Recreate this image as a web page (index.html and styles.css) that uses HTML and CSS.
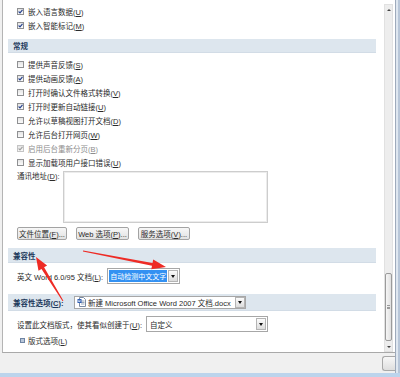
FILE: index.html
```html
<!DOCTYPE html>
<html lang="zh-CN">
  <head>
    <meta charset="UTF-8" />
    <meta name="viewport" content="width=device-width, initial-scale=1.0" />
    <title>Word 选项 - 高级</title>
    <link rel="stylesheet" href="styles.css">
  </head>
  <body>
    <div class="screen">
      <div class="dialog">
        <div class="pane">
          <div class="content">
            <div class="opt"><span class="box"><svg viewBox="0 0 5 5"><path d="M0.6 2.5 2 3.9 4.5 0.8" /></svg></span><span>嵌入语言数据(<u>U</u>)</span></div>
            <div class="opt"><span class="box"><svg viewBox="0 0 5 5"><path d="M0.6 2.5 2 3.9 4.5 0.8" /></svg></span><span>嵌入智能标记(<u>M</u>)</span></div>

            <div class="section general">常规</div>
            <div class="opt"><span class="box"></span><span>提供声音反馈(<u>S</u>)</span></div>
            <div class="opt"><span class="box"><svg viewBox="0 0 5 5"><path d="M0.6 2.5 2 3.9 4.5 0.8" /></svg></span><span>提供动画反馈(<u>A</u>)</span></div>
            <div class="opt"><span class="box"></span><span>打开时确认文件格式转换(<u>V</u>)</span></div>
            <div class="opt"><span class="box"><svg viewBox="0 0 5 5"><path d="M0.6 2.5 2 3.9 4.5 0.8" /></svg></span><span>打开时更新自动链接(<u>U</u>)</span></div>
            <div class="opt"><span class="box"></span><span>允许以草稿视图打开文档(<u>D</u>)</span></div>
            <div class="opt"><span class="box"></span><span>允许后台打开网页(<u>W</u>)</span></div>
            <div class="opt off"><span class="box"><svg viewBox="0 0 5 5"><path d="M0.6 2.5 2 3.9 4.5 0.8" /></svg></span><span>启用后台重新分页(<u>B</u>)</span></div>
            <div class="opt"><span class="box"></span><span>显示加载项用户接口错误(<u>U</u>)</span></div>

            <div class="address">
              <span class="address-label">通讯地址(<u>D</u>):</span>
              <div class="textbox"></div>
            </div>

            <div class="buttons">
              <div class="btn b1"><span>文件位置(<u>F</u>)...</span></div>
              <div class="btn b2"><span>Web 选项(<u>P</u>)...</span></div>
              <div class="btn b3"><span>服务选项(<u>V</u>)...</span></div>
            </div>

            <div class="section compat">兼容性</div>
            <div class="row">
              <span class="row-label">英文 Word 6.0/95 文档(<u>L</u>):</span>
              <div class="select lang">
                <span class="value">自动检测中文文字</span>
                <span class="drop"><i></i></span>
              </div>
            </div>

            <div class="section compat-doc">
              <span class="doc-label">兼容性选项(<u>C</u>):</span>
              <div class="select doc">
                <svg class="doc-icon" viewBox="0 0 9 10">
                  <path d="M2.5 0.5h4l2 2v7h-6z" fill="#fff" stroke="#7b8ba3" />
                  <path d="M4 4h3.5M4 5.5h3.5M4 7h3.5" stroke="#9aa8bb" />
                  <rect x="0.5" y="2" width="4" height="4" fill="#2f5fb3" />
                  <path d="M1.2 3l0.6 2 0.5-1.4 0.5 1.4 0.6-2" stroke="#fff" stroke-width="0.5" fill="none" />
                </svg>
                <span class="value">新建 Microsoft Office Word 2007 文档.docx</span>
                <span class="drop"><i></i></span>
              </div>
            </div>

            <div class="row layout-row">
              <span class="row-label">设置此文档版式，使其看似创建于(<u>U</u>):</span>
              <div class="select layout">
                <span class="value">自定义</span>
                <span class="drop"><i></i></span>
              </div>
            </div>

            <div class="expander"><span class="plus"></span><span>版式选项(<u>L</u>)</span></div>
          </div>

          <!-- Scrollleiste rechts -->
          <div class="scrollbar">
            <div class="arrow up"></div>
            <div class="track"><div class="thumb"><span></span></div></div>
            <div class="arrow down"></div>
          </div>
        </div>
        <div class="footer">
          <div class="ok-edge"></div>
        </div>
      </div>
      <div class="frame"></div>
    </div>
    <div class="taskbar"></div>

    <!-- rote Markierungspfeile -->
    <svg class="marks" viewBox="0 0 400 377">
      <polygon points="62.6,301.3 63.4,300.7 44.1,267.3 47.1,265.5 36,257 38.5,270.7 41.5,268.9" />
      <polygon points="83.1,250.5 152.5,262.9 153.2,259.4 166,267 151.3,269.3 152,265.8 82.9,251.5" />
    </svg>
  </body>
</html>
```

FILE: styles.css
```css
body {
  margin: 0;
  width: 400px;
  height: 377px;
  overflow: hidden;
  background-color: #f0f0f0;
  font-family: "Liberation Sans", "Noto Sans CJK SC", sans-serif;
  font-size: 7.5px;
  color: #2a2a2a;
  position: relative;
}

u {
  text-decoration: underline;
  text-underline-offset: 1px;
}

.screen {
  display: flex;
  height: 373px;
}

.dialog {
  width: 395px;
  display: flex;
  flex-direction: column;
}

.pane {
  display: flex;
  height: 352px;
  margin-left: 2px;
  background: #fff;
  border-left: 1px solid #b4b4b4;
  border-bottom: 1px solid #a9a9a9;
}

.content {
  width: 381px;
  padding-top: 4px;
  display: flex;
  flex-direction: column;
}

/* Checkbox-Zeilen */
.opt {
  display: flex;
  align-items: center;
  gap: 4px;
  height: 14px;
  padding-left: 14px;
  white-space: nowrap;
}

.box {
  box-sizing: border-box;
  width: 7px;
  height: 7px;
  border: 1px solid #8f9092;
  background: linear-gradient(#e4e4e4, #fbfbfb);
  display: flex;
}

.box svg {
  width: 5px;
  height: 5px;
}

.box path {
  fill: none;
  stroke: #24408e;
  stroke-width: 1.1;
}

.opt.off {
  color: #8d8d8d;
}

.opt.off .box {
  border-color: #c4c4c4;
}

.opt.off .box path {
  stroke: #a0a0a0;
}

/* Abschnittsbalken */
.section {
  display: flex;
  align-items: center;
  margin: 0 8px 0 5px;
  padding-left: 5px;
  background: #dde6ee;
  border-bottom: 1px solid #d2dce6;
  box-sizing: border-box;
  font-weight: bold;
  color: #1e3a5c;
  white-space: nowrap;
}

.general {
  height: 14px;
  margin-top: 7px;
  margin-bottom: 4px;
}

.compat {
  height: 15px;
  margin-top: 8px;
}

.compat-doc {
  height: 17px;
  margin-top: 10px;
}

.doc-label {
  width: 61px;
}

.address {
  display: flex;
  margin-top: 2px;
  padding-left: 14px;
}

.address-label {
  width: 46px;
  line-height: 11px;
}

.textbox {
  box-sizing: border-box;
  width: 205px;
  height: 52px;
  border: 1px solid #cdcdcd;
  box-shadow: inset 0 0 0 1px #ececec;
}

.buttons {
  display: flex;
  gap: 9px;
  margin-top: 4px;
  padding-left: 14px;
}

.btn {
  box-sizing: border-box;
  height: 13px;
  border: 1px solid #a3a3a3;
  border-radius: 2px;
  background: linear-gradient(#f7f7f7, #e2e2e2);
  display: flex;
  align-items: center;
  justify-content: center;
  white-space: nowrap;
}

.b1 {
  width: 50px;
}

.b2 {
  width: 53px;
}

.b3 {
  width: 52px;
}

.row {
  display: flex;
  align-items: center;
  margin-top: 5px;
  padding-left: 14px;
}

.row-label {
  white-space: nowrap;
}

/* Auswahlfelder */
.select {
  box-sizing: border-box;
  display: flex;
  align-items: center;
  background: #fff;
  border: 1px solid #a7a7a7;
  padding: 1px;
  white-space: nowrap;
  overflow: hidden;
}

.select .value {
  flex: 1;
  padding-left: 2px;
  overflow: hidden;
}

.drop {
  box-sizing: border-box;
  flex: none;
  width: 10px;
  height: 100%;
  border: 1px solid #b4b4b4;
  background: linear-gradient(#fbfbfb, #dcdcdc);
  display: flex;
  align-items: center;
  justify-content: center;
}

.drop i {
  width: 0;
  height: 0;
  border-left: 2px solid transparent;
  border-right: 2px solid transparent;
  border-top: 3px solid #111;
}

.lang {
  margin-left: 4px;
  width: 73px;
  height: 16px;
}

.lang .value {
  align-self: stretch;
  display: flex;
  align-items: center;
  background: #3391f2;
  color: #fff;
  margin-right: 1px;
  padding-left: 1px;
  font-size: 7px;
}

.doc {
  width: 172px;
  height: 13px;
  padding: 0;
  font-weight: normal;
  color: #2a2a2a;
}

.doc-icon {
  flex: none;
  width: 9px;
  height: 10px;
  margin-left: 2px;
}

.doc .value {
  padding-left: 2px;
}

.layout {
  margin-left: 4px;
  width: 122px;
  height: 16px;
}

.layout .drop {
  height: 12px;
}

.expander {
  display: flex;
  align-items: center;
  gap: 3px;
  height: 12px;
  margin-top: 2px;
  padding-left: 17px;
}

.plus {
  box-sizing: border-box;
  width: 5px;
  height: 5px;
  border: 1px solid #6e84a3;
  background: #b9c7d9;
}

/* Scrollleiste */
.scrollbar {
  box-sizing: border-box;
  width: 9px;
  margin: 4px 2px 0 0;
  background: #ededed;
  border: 1px solid #e1e1e1;
  display: flex;
  flex-direction: column;
}

.arrow {
  height: 9px;
  display: flex;
  align-items: center;
  justify-content: center;
}

.arrow::after {
  content: "";
  border-left: 2px solid transparent;
  border-right: 2px solid transparent;
}

.up::after {
  border-bottom: 2px solid #444;
}

.down::after {
  border-top: 2px solid #444;
}

.track {
  flex: 1;
  display: flex;
  flex-direction: column;
  justify-content: flex-end;
}

.thumb {
  box-sizing: border-box;
  height: 68px;
  margin: 0 0 1px;
  border: 1px solid #9b9b9b;
  border-radius: 2px;
  background: linear-gradient(to right, #f6f6f6, #e0e0e0);
  display: flex;
  align-items: center;
  justify-content: center;
}

.thumb span {
  width: 3px;
  height: 4px;
  border-top: 1px solid #9a9a9a;
  border-bottom: 1px solid #9a9a9a;
  box-sizing: border-box;
  background: linear-gradient(transparent 1px, #9a9a9a 1px, #9a9a9a 2px, transparent 2px);
}

.footer {
  flex: 1;
  display: flex;
  justify-content: flex-end;
  padding-top: 3px;
}

.ok-edge {
  box-sizing: border-box;
  width: 13px;
  height: 15px;
  border: 1px solid #a8a8a8;
  border-right: none;
  border-radius: 3px 0 0 3px;
  background: linear-gradient(#f7f7f7, #dedede);
}

.frame {
  flex: 1;
  background: linear-gradient(to right, #9eaabb 0, #9eaabb 1px, #dfe7f0 1px, #dfe7f0 3px, #b8c6d8 3px);
}

.taskbar {
  height: 4px;
  background: #bcd4ec;
}

.marks {
  position: absolute;
  top: 0;
  left: 0;
  width: 400px;
  height: 377px;
  pointer-events: none;
}

.marks polygon {
  fill: #ee2b25;
}
```
